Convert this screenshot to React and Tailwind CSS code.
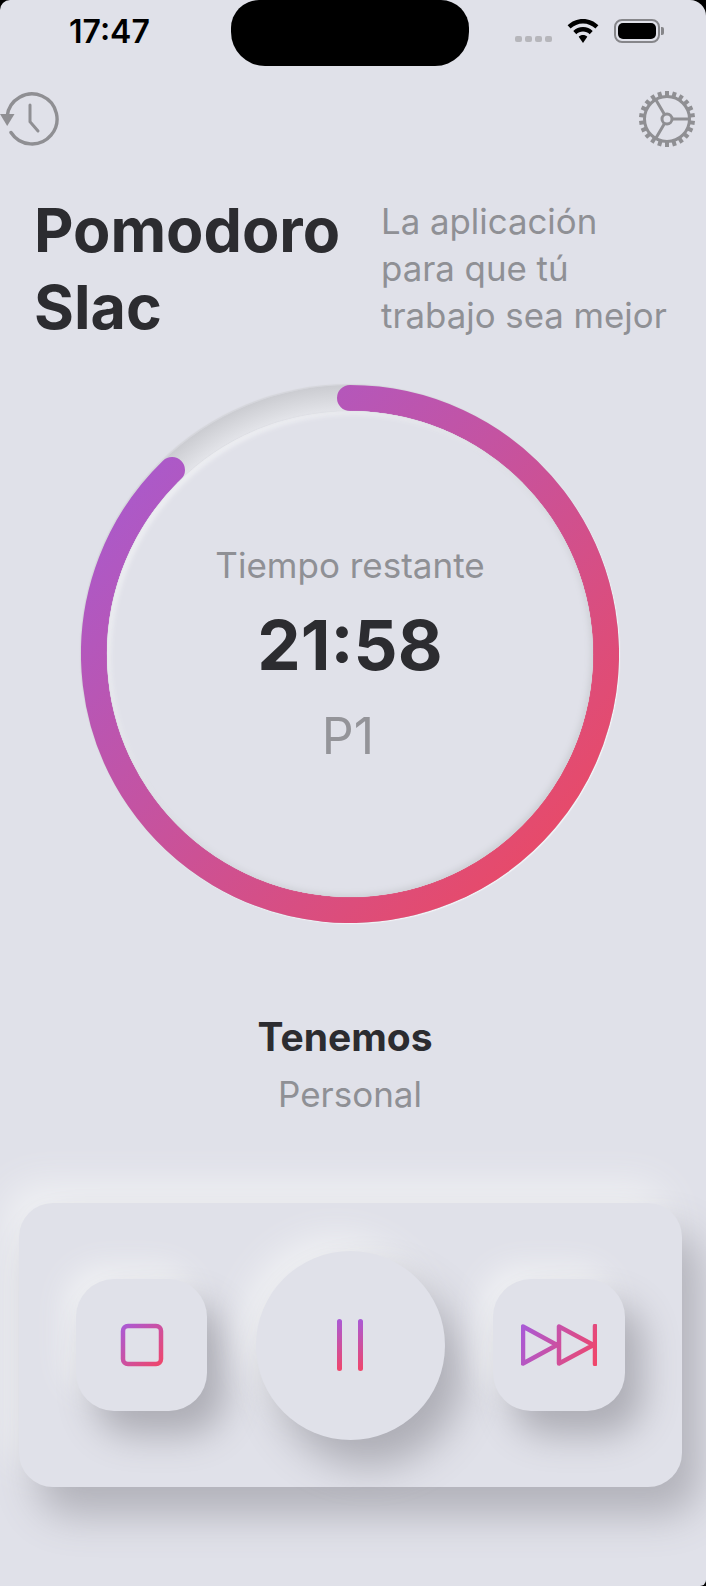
import React from 'react';

const FONT = 'font-["Inter","Noto_Sans",sans-serif]';

const GearIcon = () => {
  const teeth = Array.from({ length: 22 }, (_, i) => (i * 360) / 22);
  return (
    <svg width="58" height="58" viewBox="0 0 58 58" fill="none" stroke="#8f8f93">
      {teeth.map((a) => (
        <rect key={a} x="27" y="1" width="4" height="6" fill="#8f8f93" stroke="none" transform={`rotate(${a} 29 29)`} />
      ))}
      <circle cx="29" cy="29" r="22.5" strokeWidth="3" />
      <circle cx="29" cy="29" r="5" strokeWidth="3" />
      <path d="M34 29H51M26.5 24.6L17.7 9.5M26.5 33.4L17.7 48.5" strokeWidth="3" />
    </svg>
  );
};

const HistoryIcon = () => (
  <svg className="mt-[1px]" width="60" height="56" viewBox="0 0 60 56" fill="none" stroke="#8f8f93" strokeWidth="3.4" strokeLinecap="round">
    <path d="M7.2 25A25 25 0 1 1 11 41.5" />
    <path d="M30 14V30.7L38 40" strokeWidth="3" />
    <path d="M0 23H14.5L7.2 35Z" fill="#8f8f93" stroke="none" />
  </svg>
);

const StatusIcons = () => (
  <div className="flex items-center">
    <div className="flex gap-[3.5px] mt-[16px]">
      {[0, 1, 2, 3].map((d) => (
        <span key={d} className="w-[6.5px] h-[6.5px] rounded-[2px] bg-[#b6b6bb]" />
      ))}
    </div>
    <svg className="ml-[15px]" width="32" height="24" viewBox="0 0 32 24" fill="black">
      <path d="M16 0C10 0 4.6 2.4 0.6 6.3L3.6 9.6C6.8 6.5 11.2 4.5 16 4.5S25.2 6.5 28.4 9.6L31.4 6.3C27.4 2.4 22 0 16 0Z" />
      <path d="M16 8C12.2 8 8.8 9.5 6.3 12L9.3 15.2C11 13.5 13.4 12.5 16 12.5S21 13.5 22.7 15.2L25.7 12C23.2 9.5 19.8 8 16 8Z" />
      <path d="M16 16C14.2 16 12.8 16.6 11.7 17.7L16 24L20.3 17.7C19.2 16.6 17.8 16 16 16Z" />
    </svg>
    <div className="ml-[15px] w-[46px] h-[24px] rounded-[8px] border-2 border-[#86868a] p-[2px]">
      <div className="w-full h-full rounded-[5px] bg-black" />
    </div>
    <div className="ml-[1px] w-[3px] h-[8px] rounded-r-[2px] bg-[#86868a]" />
  </div>
);

const TimerRing = () => (
  <div className="relative w-[538px] h-[538px] rounded-full bg-[radial-gradient(closest-side,#e4e5ea_90%,#cbccd1_100%)] shadow-[1px_1px_1px_#f5f5f8,-1px_-1px_1px_#d4d5da] flex items-center justify-center">
    <svg className="absolute inset-0" width="538" height="538" viewBox="0 0 538 538" fill="none">
      <defs>
        <linearGradient id="ringGrad" gradientUnits="userSpaceOnUse" x1="70" y1="90" x2="470" y2="470">
          <stop offset="0" stopColor="#ac59c8" />
          <stop offset="1" stopColor="#e84a68" />
        </linearGradient>
      </defs>
      <path d="M269 13A256 256 0 1 1 91 85" stroke="url(#ringGrad)" strokeWidth="26" strokeLinecap="round" />
    </svg>
    <div className="relative z-10 w-[486px] h-[486px] rounded-full bg-[#e0e1e9] shadow-[inset_-2px_-2px_6px_#ccced4,inset_3px_3px_5px_#f1f2f5,0_0_1px_#c9cad0] flex flex-col items-center">
      <p className="mt-[132px] text-[35px] leading-[44px] text-[#8f9095]">Tiempo restante</p>
      <p className="mt-[18px] text-[69px] leading-[80px] font-bold text-[#2c2c30]">21:58</p>
      <p className="mt-[21px] mr-[4px] text-[50px] leading-[60px] text-[#949499]">P1</p>
    </div>
  </div>
);

const GradDefs = ({ id, x1, y1, x2, y2 }) => (
  <defs>
    <linearGradient id={id} gradientUnits="userSpaceOnUse" x1={x1} y1={y1} x2={x2} y2={y2}>
      <stop offset="0" stopColor="#a95ad6" />
      <stop offset="1" stopColor="#f0466a" />
    </linearGradient>
  </defs>
);

const Controls = () => (
  <div className="ml-[19px] mr-[24px] h-[284px] rounded-[34px] bg-[#e0e1e9] shadow-[18px_28px_40px_#b2b2ba,-14px_-20px_36px_#eff0f3] flex items-center px-[57px] justify-between">
    <button className="w-[131px] h-[132px] rounded-[38px] bg-[#e0e1e9] shadow-[18px_24px_36px_#adadb5,-12px_-14px_28px_#eff0f3] flex items-center justify-center">
      <svg width="44" height="44" viewBox="0 0 44 44" fill="none">
        <GradDefs id="stopGrad" x1="2" y1="2" x2="42" y2="42" />
        <rect x="3" y="3" width="38" height="38" rx="5" stroke="url(#stopGrad)" strokeWidth="4.5" />
      </svg>
    </button>
    <button className="w-[189px] h-[189px] rounded-full bg-[#e0e1e9] shadow-[18px_26px_40px_#adadb5,-14px_-16px_32px_#eff0f3] flex items-center justify-center">
      <svg width="28" height="52" viewBox="0 0 28 52" fill="none" strokeWidth="5" strokeLinecap="round">
        <GradDefs id="pauseGrad" x1="0" y1="0" x2="0" y2="52" />
        <path d="M3.5 2.5V49.5M24.5 2.5V49.5" stroke="url(#pauseGrad)" />
      </svg>
    </button>
    <button className="w-[132px] h-[132px] rounded-[38px] bg-[#e0e1e9] shadow-[18px_24px_36px_#adadb5,-12px_-14px_28px_#eff0f3] flex items-center justify-center">
      <svg width="76" height="42" viewBox="0 0 76 42" fill="none" strokeWidth="4.5" strokeLinejoin="round" strokeLinecap="round">
        <GradDefs id="skipGrad" x1="0" y1="6" x2="76" y2="36" />
        <path d="M2 2.5V39.5L36 21ZM38 2.5V39.5L72.5 21Z" stroke="url(#skipGrad)" />
        <path d="M74 2V40" stroke="url(#skipGrad)" />
      </svg>
    </button>
  </div>
);

export default function App() {
  return (
    <div className={`${FONT} w-[706px] h-[1586px] bg-black overflow-hidden`}>
      <div className="h-full rounded-tl-[10px] rounded-tr-[16px] rounded-br-[6px] bg-[#e0e1e9] overflow-hidden">
        <div className="h-[66px] flex items-start">
          <p className="ml-[69px] mt-[13px] w-[162px] text-[32px] leading-[38px] font-semibold text-black">17:47</p>
          <div className="w-[238px] h-[66px] rounded-b-[34px] rounded-t-[28px] bg-black" />
          <div className="ml-[46px] mt-[19px]">
            <StatusIcons />
          </div>
        </div>

        <div className="mt-[24px] flex items-start justify-between pr-[10px]">
          <HistoryIcon />
          <GearIcon />
        </div>

        <div className="mt-[44px] flex items-start pl-[34px]">
          <h1 className="w-[347px] text-[61px] leading-[77px] font-bold text-[#2c2c30]">Pomodoro Slac</h1>
          <p className="mt-[6px] text-[34.8px] leading-[47px] text-[#8f9095]">
            La aplicación
            <br />
            para que tú
            <br />
            trabajo sea mejor
          </p>
        </div>

        <div className="mt-[39px] w-[700px] flex justify-center">
          <TimerRing />
        </div>

        <div className="mt-[89px] w-[700px] flex flex-col items-center">
          <p className="mr-[10px] text-[39px] leading-[50px] font-bold text-[#2c2c30]">Tenemos</p>
          <p className="mt-[7px] text-[35px] leading-[50px] text-[#8f9095]">Personal</p>
        </div>

        <div className="mt-[84px]">
          <Controls />
        </div>
      </div>
    </div>
  );
}
